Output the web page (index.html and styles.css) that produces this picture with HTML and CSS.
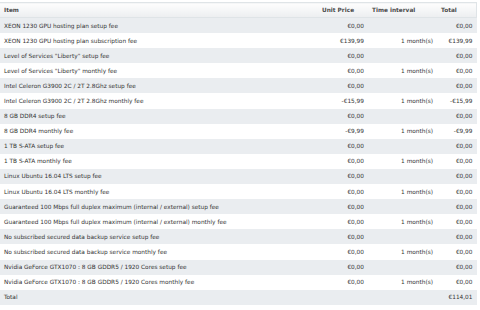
FILE: index.html
```html
<!DOCTYPE html>
<html>
<head>
    <title>Invoice items</title>
    <link rel="stylesheet" href="styles.css">
</head>
<body>
<table class="items">
    <thead>
        <tr>
            <th class="col-item">Item</th>
            <th class="col-price">Unit Price</th>
            <th class="col-interval">Time interval</th>
            <th class="col-total">Total</th>
        </tr>
    </thead>
    <tbody>
        <tr><td>XEON 1230 GPU hosting plan setup fee</td><td class="num">€0,00</td><td class="num"></td><td class="num">€0,00</td></tr>
        <tr><td>XEON 1230 GPU hosting plan subscription fee</td><td class="num">€139,99</td><td class="num">1 month(s)</td><td class="num">€139,99</td></tr>
        <tr><td>Level of Services "Liberty" setup fee</td><td class="num">€0,00</td><td class="num"></td><td class="num">€0,00</td></tr>
        <tr><td>Level of Services "Liberty" monthly fee</td><td class="num">€0,00</td><td class="num">1 month(s)</td><td class="num">€0,00</td></tr>
        <tr><td>Intel Celeron G3900 2C / 2T 2.8Ghz setup fee</td><td class="num">€0,00</td><td class="num"></td><td class="num">€0,00</td></tr>
        <tr><td>Intel Celeron G3900 2C / 2T 2.8Ghz monthly fee</td><td class="num">-€15,99</td><td class="num">1 month(s)</td><td class="num">-€15,99</td></tr>
        <tr><td>8 GB DDR4 setup fee</td><td class="num">€0,00</td><td class="num"></td><td class="num">€0,00</td></tr>
        <tr><td>8 GB DDR4 monthly fee</td><td class="num">-€9,99</td><td class="num">1 month(s)</td><td class="num">-€9,99</td></tr>
        <tr><td>1 TB S-ATA setup fee</td><td class="num">€0,00</td><td class="num"></td><td class="num">€0,00</td></tr>
        <tr><td>1 TB S-ATA monthly fee</td><td class="num">€0,00</td><td class="num">1 month(s)</td><td class="num">€0,00</td></tr>
        <tr><td>Linux Ubuntu 16.04 LTS setup fee</td><td class="num">€0,00</td><td class="num"></td><td class="num">€0,00</td></tr>
        <tr><td>Linux Ubuntu 16.04 LTS monthly fee</td><td class="num">€0,00</td><td class="num">1 month(s)</td><td class="num">€0,00</td></tr>
        <tr><td>Guaranteed 100 Mbps full duplex maximum (internal / external) setup fee</td><td class="num">€0,00</td><td class="num"></td><td class="num">€0,00</td></tr>
        <tr><td>Guaranteed 100 Mbps full duplex maximum (internal / external) monthly fee</td><td class="num">€0,00</td><td class="num">1 month(s)</td><td class="num">€0,00</td></tr>
        <tr><td>No subscribed secured data backup service setup fee</td><td class="num">€0,00</td><td class="num"></td><td class="num">€0,00</td></tr>
        <tr><td>No subscribed secured data backup service monthly fee</td><td class="num">€0,00</td><td class="num">1 month(s)</td><td class="num">€0,00</td></tr>
        <tr><td>Nvidia GeForce GTX1070 : 8 GB GDDR5 / 1920 Cores setup fee</td><td class="num">€0,00</td><td class="num"></td><td class="num">€0,00</td></tr>
        <tr><td>Nvidia GeForce GTX1070 : 8 GB GDDR5 / 1920 Cores monthly fee</td><td class="num">€0,00</td><td class="num">1 month(s)</td><td class="num">€0,00</td></tr>
        <tr class="total"><td>Total</td><td></td><td></td><td class="num">€114,01</td></tr>
    </tbody>
</table>
</body>
</html>
```

FILE: styles.css
```css
body {
    margin: 0;
    padding: 2px 3px 0 0;
    background: #fff;
    font-family: "DejaVu Sans", Verdana, sans-serif;
    font-size: 5.8px;
    color: #333;
}

.items {
    width: 100%;
    border-collapse: collapse;
    table-layout: fixed;
}

.items th {
    height: 14px;
    padding: 0 4px;
    text-align: left;
    font-weight: bold;
    color: #4a4a4a;
    background: linear-gradient(#fdfdfd, #eceef0);
    border-top: 1px solid #dfe4e7;
    border-bottom: 1px solid #dfe4e7;
}

.items th.col-total {
    border-right: 1px solid #dfe4e7;
}

.col-item { width: 310px; }
.col-price { width: 42px; }
.col-interval { width: 61px; }
.col-total { width: 31px; }

.items td {
    height: 15.1px;
    padding: 0 4px;
    white-space: nowrap;
    overflow: hidden;
}

.items tbody tr:nth-child(odd) td {
    background: #eaedf0;
}

.items td.num {
    text-align: right;
}
```
